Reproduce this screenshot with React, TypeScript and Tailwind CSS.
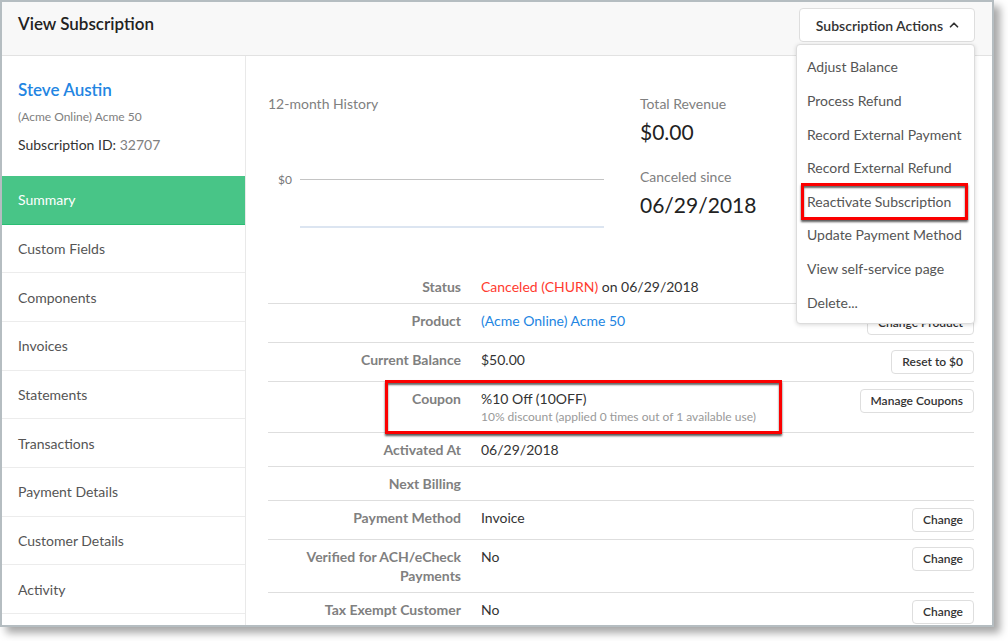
import type { ReactNode } from "react";
import { LuChevronUp } from "react-icons/lu";

const navItems = [
  "Summary",
  "Custom Fields",
  "Components",
  "Invoices",
  "Statements",
  "Transactions",
  "Payment Details",
  "Customer Details",
  "Activity",
];

const actions = [
  "Adjust Balance",
  "Process Refund",
  "Record External Payment",
  "Record External Refund",
  "Reactivate Subscription",
  "Update Payment Method",
  "View self-service page",
  "Delete...",
];

const Highlight = ({ className }: { className: string }) => (
  <span
    className={`absolute pointer-events-none border-3 border-[#fb0000] shadow-[0_2px_2px_rgba(0,0,0,0.65),inset_0_2px_2px_rgba(0,0,0,0.6)] ${className}`}
  />
);

const ActionsMenu = () => {
  return (
    <div className="relative">
      <button
        type="button"
        aria-expanded="true"
        className="flex items-center gap-1 h-[34px] pl-4 pr-[13px] bg-white border border-[#dedede] rounded text-[14px] font-semibold text-[#333]"
      >
        Subscription Actions
        <LuChevronUp size={14} strokeWidth={3} />
      </button>
      <ul className="absolute z-10 right-0 top-9 w-[179px] h-[280px] pt-[5px] pb-1 grid grid-rows-8 bg-white border border-[#dcdcdc] rounded shadow-[0_1px_4px_rgba(0,0,0,0.15)]">
        {actions.map((action) => (
          <li key={action} className="relative flex items-center">
            <a href="#" className="pl-[10px] text-[14px] text-[#555] whitespace-nowrap">
              {action}
            </a>
            {action === "Reactivate Subscription" && (
              <Highlight className="left-1 right-[6px] -top-[2px] -bottom-[2px]" />
            )}
          </li>
        ))}
      </ul>
    </div>
  );
};

const Sidebar = () => {
  return (
    <aside className="w-[244px] shrink-0 border-r border-[#e9e9e9]">
      <div className="h-[120px] px-4 pt-6">
        <a href="#" className="block text-[17px] leading-5 font-semibold text-[#2285e2]">
          Steve Austin
        </a>
        <p className="mt-[7px] text-[12px] leading-5 text-[#808080]">(Acme Online) Acme 50</p>
        <p className="mt-[7px] text-[14px] leading-[22px] text-[#333]">
          Subscription ID: <span className="text-[#808080]">32707</span>
        </p>
      </div>
      <nav className="grid grid-rows-9 h-[438px]">
        {navItems.map((item, i) => (
          <a
            key={item}
            href="#"
            className={`flex items-center px-4 border-b text-[14px] ${
              i === 0
                ? "bg-[#48c587] border-[#2bbd73] text-white"
                : "border-[#ececec] text-[#555]"
            }`}
          >
            {item}
          </a>
        ))}
      </nav>
    </aside>
  );
};

const Overview = () => {
  return (
    <section className="flex h-[214px] pt-[37px]">
      <div className="w-[336px] mr-9">
        <h2 className="text-[14px] leading-[22px] text-[#808080]">12-month History</h2>
        <div className="flex gap-2 mt-[55px] pl-[10px]">
          <span className="text-[12px] leading-5 text-[#777]">$0</span>
          <div className="flex-1 h-[49px] mt-[9px] border-t border-t-[#c4c4c4] border-b-2 border-b-[#dce5f1]" />
        </div>
      </div>
      <dl>
        <dt className="text-[14px] leading-[22px] text-[#808080]">Total Revenue</dt>
        <dd className="mt-[3px] text-[21px] leading-7 text-[#222]">$0.00</dd>
        <dt className="mt-5 text-[14px] leading-[22px] text-[#808080]">Canceled since</dt>
        <dd className="mt-[3px] text-[21px] leading-7 text-[#222]">06/29/2018</dd>
      </dl>
    </section>
  );
};

type RowProps = {
  label: string;
  action?: string;
  highlighted?: boolean;
  children?: ReactNode;
};

const Row = ({ label, action, highlighted, children }: RowProps) => {
  return (
    <tr className="relative border-b border-[#dedede] align-top">
      <th scope="row" className="w-[193px] pl-6 py-[7px] text-right font-bold text-[#808080]">
        {label}
      </th>
      <td className="pl-5 py-[7px] text-[#333]">{children}</td>
      <td className="py-[7px] text-right">
        {action && (
          <button
            type="button"
            className="block ml-auto h-6 px-[10px] bg-white border border-[#dedede] rounded text-[12px] leading-5 font-semibold text-[#333] whitespace-nowrap"
          >
            {action}
          </button>
        )}
        {highlighted && <Highlight className="left-[117px] right-[192px] -top-[2px] -bottom-[2px]" />}
      </td>
    </tr>
  );
};

const DetailsTable = () => {
  return (
    <table className="w-full border-collapse text-[14px] leading-[19px]">
      <tbody>
        <Row label="Status">
          <span className="text-[#ff3b30]">Canceled (CHURN)</span> on 06/29/2018
        </Row>
        <Row label="Product" action="Change Product">
          <a href="#" className="text-[#2285e2]">
            (Acme Online) Acme 50
          </a>
        </Row>
        <Row label="Current Balance" action="Reset to $0">
          $50.00
        </Row>
        <Row label="Coupon" action="Manage Coupons" highlighted>
          %10 Off (10OFF)
          <p className="text-[12px] leading-[17px] text-[#999]">
            10% discount (applied 0 times out of 1 available use)
          </p>
        </Row>
        <Row label="Activated At">06/29/2018</Row>
        <Row label="Next Billing" />
        <Row label="Payment Method" action="Change">
          Invoice
        </Row>
        <Row label="Verified for ACH/eCheck Payments" action="Change">
          No
        </Row>
        <Row label="Tax Exempt Customer" action="Change">
          No
        </Row>
      </tbody>
    </table>
  );
};

const App = () => {
  return (
    <div className="h-screen pr-[14px] pb-[14px] bg-white overflow-hidden font-[Lato,sans-serif]">
      <div className="flex flex-col h-full bg-white border-2 border-[#b5bdc1] overflow-hidden shadow-[6px_6px_8px_rgba(0,0,0,0.35)]">
        <header className="flex items-start justify-between h-[54px] shrink-0 pl-4 pr-[17px] pt-[6px] bg-[#f8f8f8] border-b border-[#e2e2e2]">
          <h1 className="pt-1 text-[17px] leading-6 font-semibold text-[#222]">View Subscription</h1>
          <ActionsMenu />
        </header>
        <div className="flex flex-1 min-h-0">
          <Sidebar />
          <main className="flex-1 min-w-0 pl-[22px] pr-[18px]">
            <Overview />
            <DetailsTable />
          </main>
        </div>
      </div>
    </div>
  );
};

export default App;
